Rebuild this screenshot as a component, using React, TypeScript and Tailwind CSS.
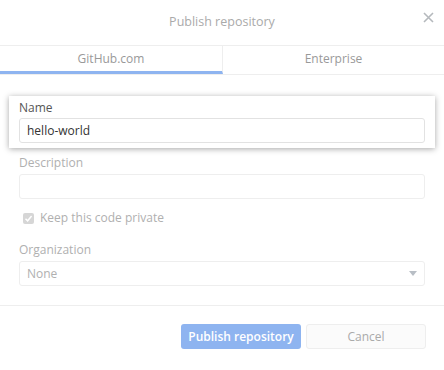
import React from 'react';

function App() {
  return (
    <div className="w-[444px] h-[370px] bg-white text-[12px] text-[#333] overflow-hidden" style={{ fontFamily: '"Open Sans", "Noto Sans", sans-serif' }}>
      {/* header */}
      <div className="relative h-[46px] flex items-center justify-center border-b border-[#eeeeee]">
        <span className="text-[12.5px] text-[#aaaaaa]">Publish repository</span>
        <svg className="absolute right-[10px] top-[12px]" width="11" height="11" viewBox="0 0 11 11">
          <path d="M1 1L10 10M10 1L1 10" stroke="#b5b9bd" strokeWidth="1.6" />
        </svg>
      </div>

      {/* tabs */}
      <div className="flex h-[29px] border-b border-[#eeeeee]">
        <div className="w-[223px] flex items-center justify-center border-b-[3px] border-[#8eb4f0] border-r border-r-[#eeeeee] text-[#999999]">GitHub.com</div>
        <div className="flex-1 flex items-center justify-center text-[#999999] pb-[3px]">Enterprise</div>
      </div>

      <div className="px-[9px] pt-[21px]">
        {/* highlighted name */}
        <div className="bg-white shadow-[0_1px_6px_rgba(0,0,0,0.35)] px-[10px] pt-[2px] pb-[5px]">
          <div className="text-[#555555] h-[20px] leading-[20px]">Name</div>
          <div className="h-[25px] border border-[#e2e2e2] rounded-[3px] flex items-center px-[7px] text-[#333333]">hello-world</div>
        </div>

        <div className="px-[10px] pt-[5px]">
          <div className="text-[#b0b0b0] h-[20px] leading-[20px]">Description</div>
          <div className="h-[25px] border border-[#eeeeee] rounded-[3px] mt-[1px]"></div>

          <div className="flex items-center gap-[6px] mt-[10px] pl-[4px] h-[18px]">
            <div className="w-[11px] h-[11px] rounded-[2px] bg-[#d6d6d6] flex items-center justify-center">
              <svg width="9" height="9" viewBox="0 0 9 9">
                <path d="M1.5 4.8L3.6 6.8L7.6 2" stroke="#ffffff" strokeWidth="1.5" fill="none" />
              </svg>
            </div>
            <span className="text-[#b0b0b0]">Keep this code private</span>
          </div>

          <div className="text-[#b0b0b0] h-[20px] leading-[20px] mt-[13px]">Organization</div>
          <div className="h-[25px] border border-[#eeeeee] rounded-[3px] mt-[1px] flex items-center justify-between px-[7px] text-[#b0b0b0]">
            <span>None</span>
            <svg width="8" height="5" viewBox="0 0 8 5">
              <path d="M0 0H8L4 5Z" fill="#b8bec5" />
            </svg>
          </div>
        </div>
      </div>

      <div className="border-t border-[#eeeeee] mt-[19px] flex justify-end gap-[5px] pt-[18px] pr-[18px]">
        <div className="w-[120px] h-[25px] rounded-[3px] bg-[#8eb4f0] text-white font-semibold flex items-center justify-center">Publish repository</div>
        <div className="w-[120px] h-[25px] rounded-[3px] border border-[#eeeeee] bg-[#fbfbfb] text-[#aaaaaa] flex items-center justify-center">Cancel</div>
      </div>
    </div>
  );
}

export default App;
